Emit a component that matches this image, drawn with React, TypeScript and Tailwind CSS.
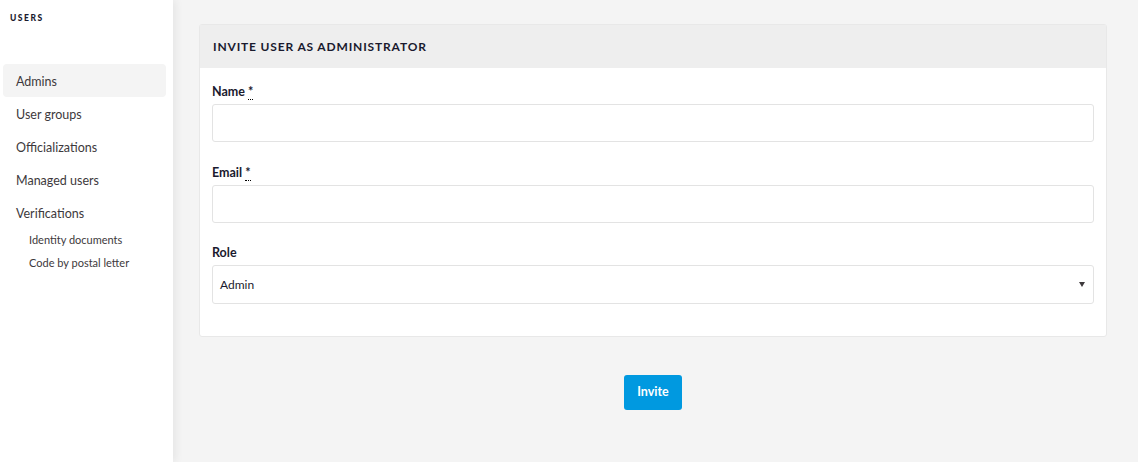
import React from 'react';

const navItems = ['Admins', 'User groups', 'Officializations', 'Managed users', 'Verifications'];
const subItems = ['Identity documents', 'Code by postal letter'];

export default function App() {
  return (
    <div className="flex w-[1138px] h-[462px] bg-[#f4f4f4] text-[#1a1a2e] overflow-hidden font-['Lato',sans-serif]">
      {/* Sidebar */}
      <aside className="w-[173px] shrink-0 bg-white shadow-[3px_0_8px_rgba(0,0,0,0.06)] z-10">
        <h2 className="pl-[10px] pt-[13px] text-[8.5px] font-black tracking-[0.18em] leading-[10px] text-[#1a1a2e]">USERS</h2>
        <nav className="mt-[41px] pl-[3px] pr-[7px]">
          {navItems.map((item, i) => (
            <div
              key={item}
              className={`h-[33px] flex items-center pl-[13px] pt-[3px] text-[12.5px] text-[#3d393c] rounded ${i === 0 ? 'bg-[#f4f4f4]' : ''}`}
            >
              {item}
            </div>
          ))}
          <div className="pl-[26px]">
            {subItems.map((s) => (
              <div key={s} className="h-[23px] flex items-center text-[11px] text-[#3d393c]">
                {s}
              </div>
            ))}
          </div>
        </nav>
      </aside>

      {/* Main */}
      <main className="flex-1 pl-[26px] pr-[31px] pt-[24px]">
        <div className="bg-white border border-[#e8e8e8] rounded-[3px]">
          <div className="h-[43px] bg-[#eeeeee] flex items-center px-[13px]">
            <h1 className="text-[12px] font-bold tracking-[0.07em] text-[#1a1a2e]">INVITE USER AS ADMINISTRATOR</h1>
          </div>
          <div className="px-[12px] pt-[16px] pb-[32px]">
            <label className="block text-[12.5px] font-bold leading-[16px] mb-[4px]">
              Name <abbr className="no-underline border-b border-dotted border-black">*</abbr>
            </label>
            <div className="h-[38px] border border-[#e3e3e3] rounded-[3px] bg-white" />

            <label className="block text-[12.5px] font-bold leading-[16px] mt-[23px] mb-[4px]">
              Email <abbr className="no-underline border-b border-dotted border-black">*</abbr>
            </label>
            <div className="h-[38px] border border-[#e3e3e3] rounded-[3px] bg-white" />

            <label className="block text-[12.5px] font-bold leading-[16px] mt-[22px] mb-[4px]">Role</label>
            <div className="h-[39px] border border-[#e3e3e3] rounded-[3px] bg-white flex items-center justify-between pl-[7px] pr-[8px] text-[12px]">
              <span>Admin</span>
              <svg width="6" height="5" viewBox="0 0 6 5"><path d="M0 0h6L3 5z" fill="#3d393c" /></svg>
            </div>
          </div>
        </div>
        <div className="flex justify-center mt-[38px]">
          <button className="w-[58px] h-[35px] bg-[#0099e0] hover:bg-[#0085c4] rounded-[3px] text-white text-[12.5px] font-bold">
            Invite
          </button>
        </div>
      </main>
    </div>
  );
}
